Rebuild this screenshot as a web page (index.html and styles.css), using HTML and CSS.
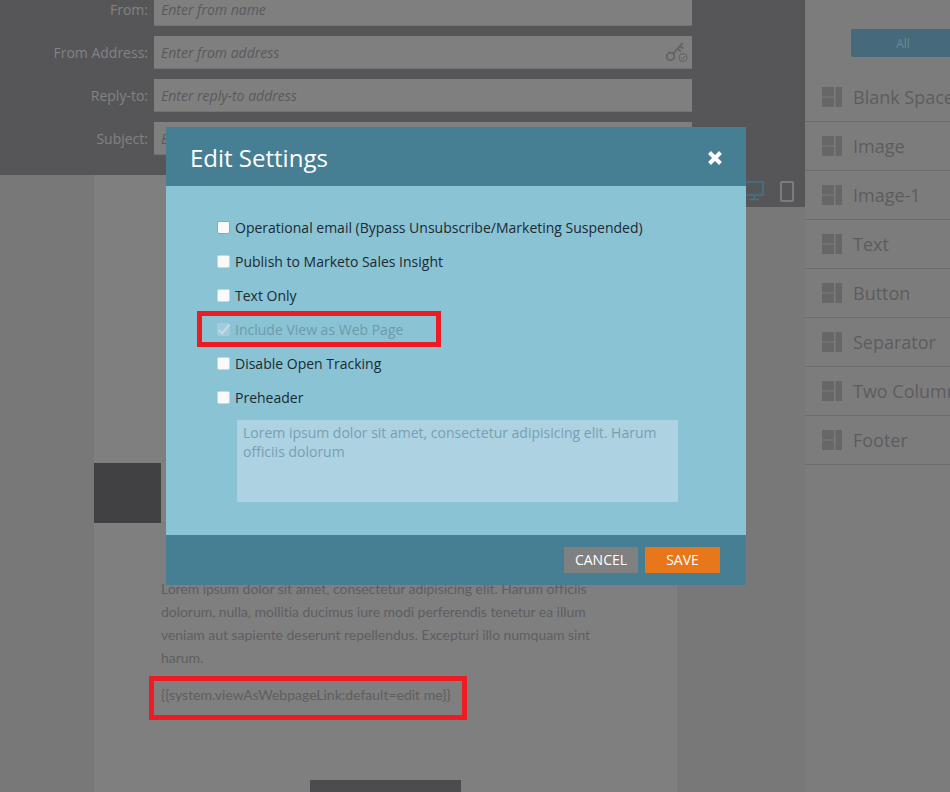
FILE: index.html
```html
<!DOCTYPE html>
<html lang="en">
<head>
    <meta charset="UTF-8">
    <title>Edit Settings</title>
    <link rel="stylesheet" href="styles.css">
</head>
<body>
    <div class="page">
        <div class="main">
            <div class="header">
                <div class="field">
                    <label>From:</label>
                    <div class="field-input"><input type="text" placeholder="Enter from name"></div>
                </div>
                <div class="field">
                    <label>From Address:</label>
                    <div class="field-input">
                        <input type="text" placeholder="Enter from address">
                        <svg class="key-icon" width="24" height="24" viewBox="0 0 24 24" fill="none" stroke="#626263">
                            <circle cx="5.5" cy="15.5" r="3.8" stroke-width="1.8"/>
                            <path d="M8.2 12.8 L17.5 2 M12.5 7.8 L16 10.5 M15 5 L18.5 7.5" stroke-width="1.8"/>
                            <circle cx="18" cy="16.5" r="4" stroke-width="1"/>
                            <path d="M16 16.5 L17.5 18 L20 15" stroke-width="1"/>
                        </svg>
                    </div>
                </div>
                <div class="field">
                    <label>Reply-to:</label>
                    <div class="field-input"><input type="text" placeholder="Enter reply-to address"></div>
                </div>
                <div class="field">
                    <label>Subject:</label>
                    <div class="field-input"><input type="text" placeholder="Enter subject"></div>
                </div>
            </div>
            <div class="canvas">
                <div class="email">
                    <div class="email-block"></div>
                    <p class="email-text">Lorem ipsum dolor sit amet, consectetur adipisicing elit. Harum officiis dolorum, nulla, mollitia ducimus iure modi perferendis tenetur ea illum veniam aut sapiente deserunt repellendus. Excepturi illo numquam sint harum.</p>
                    <div class="email-link red-box">{{system.viewAsWebpageLink:default=edit me}}</div>
                    <div class="email-button"></div>
                </div>
                <div class="canvas-side">
                    <div class="devices">
                        <svg width="22" height="20" viewBox="0 0 22 20" fill="none" stroke="#41738a" stroke-width="1.6">
                            <rect x="2" y="1" width="18" height="13"/>
                            <path d="M11 14 V18 M6 18.5 H16"/>
                        </svg>
                        <svg width="14" height="21" viewBox="0 0 14 21" fill="none" stroke="#7c7c7d" stroke-width="2">
                            <rect x="1" y="1" width="12" height="19" rx="1"/>
                        </svg>
                    </div>
                </div>
            </div>
        </div>

        <div class="sidebar">
            <div class="filter"><button class="filter-all">All</button></div>
            <ul class="modules">
                <li><svg class="module-icon" width="20" height="20" viewBox="0 0 20 20"><path d="M0 0H12V9.5H0ZM0 10.5H12V20H0ZM13.5 0H20V20H13.5Z"/></svg>Blank Space</li>
                <li><svg class="module-icon" width="20" height="20" viewBox="0 0 20 20"><path d="M0 0H12V9.5H0ZM0 10.5H12V20H0ZM13.5 0H20V20H13.5Z"/></svg>Image</li>
                <li><svg class="module-icon" width="20" height="20" viewBox="0 0 20 20"><path d="M0 0H12V9.5H0ZM0 10.5H12V20H0ZM13.5 0H20V20H13.5Z"/></svg>Image-1</li>
                <li><svg class="module-icon" width="20" height="20" viewBox="0 0 20 20"><path d="M0 0H12V9.5H0ZM0 10.5H12V20H0ZM13.5 0H20V20H13.5Z"/></svg>Text</li>
                <li><svg class="module-icon" width="20" height="20" viewBox="0 0 20 20"><path d="M0 0H12V9.5H0ZM0 10.5H12V20H0ZM13.5 0H20V20H13.5Z"/></svg>Button</li>
                <li><svg class="module-icon" width="20" height="20" viewBox="0 0 20 20"><path d="M0 0H12V9.5H0ZM0 10.5H12V20H0ZM13.5 0H20V20H13.5Z"/></svg>Separator</li>
                <li><svg class="module-icon" width="20" height="20" viewBox="0 0 20 20"><path d="M0 0H12V9.5H0ZM0 10.5H12V20H0ZM13.5 0H20V20H13.5Z"/></svg>Two Column</li>
                <li><svg class="module-icon" width="20" height="20" viewBox="0 0 20 20"><path d="M0 0H12V9.5H0ZM0 10.5H12V20H0ZM13.5 0H20V20H13.5Z"/></svg>Footer</li>
            </ul>
        </div>

        <div class="modal">
            <div class="modal-head">
                <h2>Edit Settings</h2>
                <svg class="modal-close" width="14" height="14" viewBox="0 0 14 14" stroke="#fff" stroke-width="4"><path d="M1.5 1.5 L12.5 12.5 M12.5 1.5 L1.5 12.5"/></svg>
            </div>
            <div class="modal-body">
                <label class="check"><input type="checkbox" class="focused"> Operational email (Bypass Unsubscribe/Marketing Suspended)</label>
                <label class="check"><input type="checkbox"> Publish to Marketo Sales Insight</label>
                <label class="check"><input type="checkbox"> Text Only</label>
                <label class="check disabled red-box"><input type="checkbox" checked disabled> Include View as Web Page</label>
                <label class="check"><input type="checkbox"> Disable Open Tracking</label>
                <label class="check"><input type="checkbox"> Preheader</label>
                <textarea class="preheader" readonly>Lorem ipsum dolor sit amet, consectetur adipisicing elit. Harum officiis dolorum</textarea>
            </div>
            <div class="modal-foot">
                <button class="btn btn-cancel">CANCEL</button>
                <button class="btn btn-save">SAVE</button>
            </div>
        </div>
    </div>
</body>
</html>
```
FILE: styles.css
```css
html, body {
    height: 100%;
    margin: 0;
    overflow: hidden;
}

body {
    font-family: "Open Sans", sans-serif;
    font-size: 14px;
}

.page {
    position: relative;
    display: flex;
    height: 792px;
    overflow: hidden;
    background-color: #7c7c7d;
}

.main {
    width: 805px;
    flex-shrink: 0;
}

/* top form */
.header {
    height: 175px;
    background-color: #565658;
    overflow: hidden;
}

.field {
    display: flex;
    align-items: center;
    height: 33px;
    margin-bottom: 10px;
}

.field:first-child {
    margin-top: -7px;
}

.field label {
    width: 148px;
    margin-right: 6px;
    text-align: right;
    color: #828283;
}

.field-input {
    position: relative;
    width: 538px;
}

.field-input input {
    display: block;
    width: 100%;
    height: 33px;
    box-sizing: border-box;
    padding: 0 7px;
    border: 0;
    border-bottom: 1px solid #737374;
    background-color: #7f7f80;
    font-family: "Open Sans", sans-serif;
    font-size: 14px;
}

.field-input input::placeholder {
    color: #5a5a5c;
    font-style: italic;
    opacity: 1;
}

.key-icon {
    position: absolute;
    right: 3px;
    top: 5px;
}

/* email canvas */
.canvas {
    display: flex;
    height: 617px;
    padding-left: 94px;
    background-color: #787879;
}

.email {
    width: 583px;
    flex-shrink: 0;
    box-sizing: border-box;
    padding: 288px 0 0 67px;
    background-color: #7f7f80;
}

.email-block {
    width: 67px;
    height: 60px;
    margin-left: -67px;
    background-color: #414042;
}

.email-text {
    width: 440px;
    margin: 54px 0 0;
    font-family: Lato, sans-serif;
    font-size: 14px;
    line-height: 23px;
    letter-spacing: -0.04px;
    color: #5e5e60;
}

.email-link {
    width: fit-content;
    height: 34px;
    margin: 7px 0 0 -12px;
    padding: 0 11px 0 7px;
    line-height: 28px;
    font-family: Lato, sans-serif;
    color: #5e5e60;
}

.email-button {
    width: 151px;
    height: 40px;
    margin: 60px 0 0 149px;
    background-color: #4c4c4e;
}

.red-box {
    border: 5px solid #ed1c24;
}

.canvas-side {
    flex: 1;
}

.devices {
    display: flex;
    justify-content: flex-end;
    align-items: flex-start;
    gap: 15px;
    height: 32px;
    box-sizing: border-box;
    padding: 6px 11px 0 0;
    background-color: #565658;
}

/* modules column */
.sidebar {
    flex: 1;
    overflow: hidden;
    background-color: #7c7c7d;
}

.filter {
    height: 73px;
    padding: 29px 0 0 46px;
    box-sizing: border-box;
}

.filter-all {
    display: block;
    width: 104px;
    height: 28px;
    border: 0;
    border-radius: 2px;
    background-color: #46697c;
    color: #6d8a9a;
    font-family: "Open Sans", sans-serif;
    font-size: 12px;
}

.modules {
    list-style: none;
    margin: 0;
    padding: 0;
    width: 200px;
}

.modules li {
    display: flex;
    align-items: center;
    gap: 11px;
    height: 48px;
    padding-left: 17px;
    border-bottom: 1px solid #6c6c6d;
    font-size: 18px;
    color: #5c5c5e;
    white-space: nowrap;
}

.module-icon {
    fill: #676768;
    flex-shrink: 0;
}

/* dialog */
.modal {
    position: absolute;
    left: 166px;
    top: 127px;
    width: 580px;
}

.modal-head {
    display: flex;
    justify-content: space-between;
    align-items: center;
    height: 59px;
    box-sizing: border-box;
    padding: 1px 24px 0;
    background-color: #467f94;
}

.modal-head h2 {
    margin: 0;
    font-size: 24px;
    font-weight: 400;
    color: #fff;
}

.modal-close {
    margin-top: 1px;
}

.modal-body {
    height: 349px;
    box-sizing: border-box;
    padding: 24px 0 0 51px;
    background-color: #8ac3d3;
}

.check {
    display: flex;
    align-items: center;
    gap: 5px;
    height: 34px;
    color: #1b2a33;
}

.check input {
    appearance: none;
    position: relative;
    width: 13px;
    height: 13px;
    box-sizing: border-box;
    margin: 0;
    border: 1px solid #c9d6dc;
    border-radius: 2px;
    background-color: #fafafa;
}

.check.disabled {
    width: 219px;
    height: 26px;
    margin: -1px 0 -1px -20px;
    padding-left: 15px;
    color: #6f9aab;
}

.check.disabled input {
    border-color: #a3cbd9;
    background-color: #a3cbd9;
}

/* tick of the disabled box */
.check.disabled input::before {
    content: "";
    position: absolute;
    left: 3px;
    top: -2px;
    width: 4px;
    height: 10px;
    border: solid #c4dde7;
    border-width: 0 2px 2px 0;
    transform: rotate(40deg);
}

.check .focused {
    border-color: #7fa9d6;
}

.preheader {
    display: block;
    width: 441px;
    height: 82px;
    box-sizing: border-box;
    margin: 6px 0 0 20px;
    padding: 3px 6px;
    border: 0;
    outline: 0;
    resize: none;
    overflow: hidden;
    background-color: #add2e2;
    color: #78a0b0;
    font-family: "Open Sans", sans-serif;
    font-size: 14px;
    line-height: 19px;
}

.modal-foot {
    display: flex;
    justify-content: flex-end;
    gap: 7px;
    height: 50px;
    box-sizing: border-box;
    padding: 12px 26px 0 0;
    background-color: #467f94;
}

.btn {
    height: 26px;
    padding: 0 0 2px;
    border: 0;
    color: #fff;
    font-family: "Open Sans", sans-serif;
    font-size: 14px;
}

.btn-cancel {
    width: 74px;
    background-color: #808080;
}

.btn-save {
    width: 75px;
    background-color: #e8761a;
}
```
